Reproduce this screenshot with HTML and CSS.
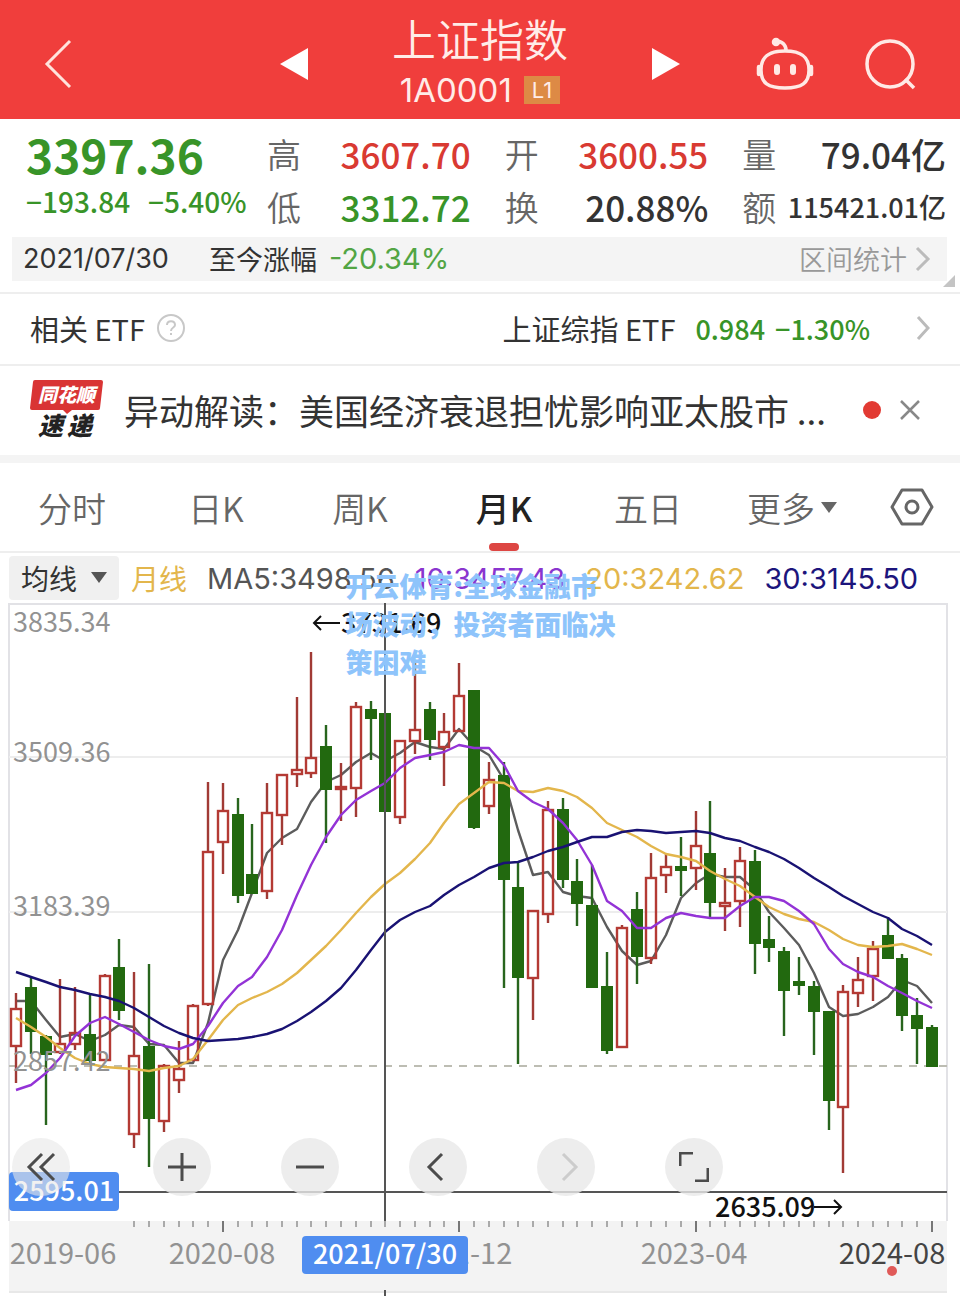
FILE: index.html
```html
<!DOCTYPE html>
<html lang="zh-CN">
<head>
  <meta charset="UTF-8" />
  <meta name="viewport" content="width=device-width, initial-scale=1.0"/>
  <title>上证指数 1A0001</title>
  <link rel="stylesheet" href="styles.css">
</head>
<body>
  <header class="topbar">
    <div class="topbar-left">
      <button type="button" class="icon-btn" aria-label="返回">
        <svg width="30" height="52" viewBox="0 0 30 52"><path d="M26 3L3 26L26 49" fill="none" stroke="#ffe3dc" stroke-width="3"/></svg>
      </button>
    </div>
    <div class="topbar-nav">
      <button type="button" class="icon-btn" aria-label="上一个">
        <svg width="30" height="32" viewBox="0 0 30 32"><path d="M1 16L29 0V32Z" fill="#fff"/></svg>
      </button>
      <div class="title">
        <h1>上证指数</h1>
        <p>1A0001 <span class="level">L1</span></p>
      </div>
      <button type="button" class="icon-btn" aria-label="下一个">
        <svg width="30" height="32" viewBox="0 0 30 32"><path d="M29 16L1 0V32Z" fill="#fff"/></svg>
      </button>
    </div>
    <div class="topbar-right">
      <button type="button" class="icon-btn" aria-label="智能助手">
        <svg width="58" height="54" viewBox="0 0 58 54" fill="none" stroke="#ffe9e5" stroke-width="3.5" stroke-linecap="round">
          <path d="M29 14C46 14 53 20 53 33S46 51 29 51S5 46 5 33S12 14 29 14Z"/>
          <path d="M30 13C30 8 26 4 20 4"/>
          <circle cx="20" cy="5" r="2.5" fill="#ffe9e5"/>
          <path d="M3 30V37M55 30V37" stroke-width="4.5"/>
          <path d="M21 30V35M37 30V35" stroke-width="6"/>
        </svg>
      </button>
      <button type="button" class="icon-btn" aria-label="搜索">
        <svg width="52" height="52" viewBox="0 0 52 52" fill="none" stroke="#ffe9e5" stroke-width="3.5"><circle cx="26" cy="26" r="23"/><path d="M41 41L50 50"/></svg>
      </button>
    </div>
  </header>

  <main>
    <section class="quote">
      <div class="price down">
        <strong>3397.36</strong>
        <div class="change"><span>−193.84</span><span>−5.40%</span></div>
      </div>
      <dl class="stats">
        <div><dt>高</dt><dd class="up">3607.70</dd></div>
        <div><dt>开</dt><dd class="up">3600.55</dd></div>
        <div><dt>量</dt><dd>79.04亿</dd></div>
        <div><dt>低</dt><dd class="down">3312.72</dd></div>
        <div><dt>换</dt><dd>20.88%</dd></div>
        <div><dt>额</dt><dd class="small">115421.01亿</dd></div>
      </dl>
    </section>

    <section class="range">
      <span class="range-date">2021/07/30</span>
      <span>至今涨幅</span>
      <span class="range-value">-20.34%</span>
      <a href="#" class="range-link">区间统计
        <svg width="16" height="26" viewBox="0 0 16 26"><path d="M2 2L13 13L2 24" fill="none" stroke="#bbb" stroke-width="3"/></svg>
      </a>
      <svg class="corner" width="12" height="12" viewBox="0 0 12 12"><path d="M12 0V12H0Z" fill="#c4c4c4"/></svg>
    </section>

    <section class="etf">
      <span>相关 ETF</span>
      <svg width="28" height="28" viewBox="0 0 28 28" fill="none" stroke="#c8c8c8" stroke-width="2">
        <circle cx="14" cy="14" r="13"/><path d="M10 11C10 6 18 6 18 11C18 14 14 13 14 17M14 19V21"/>
      </svg>
      <a href="#" class="etf-link">
        <span>上证综指 ETF</span>
        <b>0.984</b>
        <b>−1.30%</b>
        <svg width="14" height="26" viewBox="0 0 14 26"><path d="M2 2L12 13L2 24" fill="none" stroke="#bbb" stroke-width="3"/></svg>
      </a>
    </section>

    <section class="news">
      <svg class="news-logo" width="74" height="62" viewBox="0 0 74 62">
        <path d="M5 1H71Q73 1 73 3L70 29Q70 31 68 31H42L37 35L33 31H2Q0 31 0 29L3 3Q3 1 5 1Z" fill="#d93434"/>
        <text x="8" y="23" class="logo-top">同花顺</text>
        <text x="8" y="56" class="logo-bottom">速</text>
        <text x="37" y="56" class="logo-bottom">递</text>
      </svg>
      <a href="#" class="news-title">异动解读：美国经济衰退担忧影响亚太股市 ...</a>
      <span class="dot"></span>
      <button type="button" class="icon-btn" aria-label="关闭">
        <svg width="20" height="20" viewBox="0 0 20 20"><path d="M1 1L19 19M19 1L1 19" stroke="#888" stroke-width="2.5"/></svg>
      </button>
    </section>

    <nav class="tabs">
      <button type="button">分时</button>
      <button type="button">日K</button>
      <button type="button">周K</button>
      <button type="button" class="active">月K</button>
      <button type="button">五日</button>
      <button type="button">更多<svg width="16" height="11" viewBox="0 0 16 11"><path d="M0 0H16L8 11Z" fill="#666"/></svg></button>
      <button type="button" aria-label="设置">
        <svg width="44" height="38" viewBox="0 0 44 38" fill="none" stroke="#666" stroke-width="3"><path d="M12 2H32L42 19L32 36H12L2 19Z" stroke-linejoin="round"/><circle cx="22" cy="19" r="6"/></svg>
      </button>
    </nav>

    <section class="legend">
      <div class="select-box">
        <select aria-label="指标"><option>均线</option></select>
        <svg width="16" height="11" viewBox="0 0 16 11"><path d="M0 0H16L8 11Z" fill="#555"/></svg>
      </div>
      <span class="period">月线</span>
      <span class="ma5">MA5:3498.56</span>
      <span class="ma10">10:3457.43</span>
      <span class="ma20">20:3242.62</span>
      <span class="ma30">30:3145.50</span>
    </section>

    <section class="chart">
      <svg class="plot" viewBox="0 603 960 693" role="img" aria-label="上证指数月K线">
        <rect x="9" y="1221" width="938" height="71" fill="#f3f3f3"/>
        <g fill="none" stroke="#e2e2e6" stroke-width="2">
          <path d="M9 1221V604H947V1221"/>
          <path d="M9 757H947M9 912H947" stroke="#ededed"/>
          <path d="M9 1292H947" stroke="#e8e8e8"/>
          <path d="M9 1066H947" stroke="#bdbdb3" stroke-dasharray="8 7"/>
        </g>
        <g id="series"></g>
        <g class="axis-y">
          <text x="13" y="632">3835.34</text>
          <text x="13" y="762">3509.36</text>
          <text x="13" y="916">3183.39</text>
          <text x="13" y="1071">2857.42</text>
        </g>
        <g id="ticks" stroke="#aaa" stroke-width="2"></g>
        <path d="M9 1192H947M385 603V1221M385 1290V1296" stroke="#555" stroke-width="2"/>
        <g class="marker">
          <text x="341" y="633">3731.69</text>
          <text x="715" y="1217">2635.09</text>
        </g>
        <path d="M340 623H314M321 616L314 623L321 630M814 1207H841M834 1200L841 1207L834 1214" fill="none" stroke="#111" stroke-width="2"/>
        <g class="axis-x">
          <text x="63" y="1264">2019-06</text>
          <text x="222" y="1264">2020-08</text>
          <text x="459" y="1264">2021-12</text>
          <text x="694" y="1264">2023-04</text>
          <text x="892" y="1264" class="current">2024-08</text>
        </g>
        <circle cx="892" cy="1271" r="5" fill="#e05a58"/>
        <rect x="9" y="1172" width="110" height="39" rx="4" fill="#4f8df0"/>
        <rect x="302" y="1236" width="166" height="38" rx="4" fill="#4f8df0"/>
        <g class="tag">
          <text x="64" y="1201">2595.01</text>
          <text x="385" y="1264">2021/07/30</text>
        </g>
      </svg>
      <div class="tools">
        <button type="button" class="first" aria-label="最早">
          <svg width="30" height="30" viewBox="0 0 30 30"><path d="M16 2L3 15L16 28M28 2L15 15L28 28"/></svg>
        </button>
        <button type="button" aria-label="放大">
          <svg width="30" height="30" viewBox="0 0 30 30"><path d="M15 1V29M1 15H29"/></svg>
        </button>
        <button type="button" aria-label="缩小">
          <svg width="30" height="30" viewBox="0 0 30 30"><path d="M1 15H29"/></svg>
        </button>
        <button type="button" aria-label="左移">
          <svg width="30" height="30" viewBox="0 0 30 30"><path d="M19 2L6 15L19 28"/></svg>
        </button>
        <button type="button" class="off" aria-label="右移">
          <svg width="30" height="30" viewBox="0 0 30 30"><path d="M12 2L25 15L12 28"/></svg>
        </button>
        <button type="button" aria-label="全屏">
          <svg width="30" height="30" viewBox="0 0 30 30"><path d="M1 14V1H14M29 16V29H16"/></svg>
        </button>
      </div>
      <p class="watermark">开云体育:全球金融市场波动，投资者面临决策困难</p>
    </section>
  </main>

  <script src="chart.js"></script>
</body>
</html>
```

FILE: styles.css
```css
* {
  margin: 0;
  padding: 0;
  box-sizing: border-box;
}

body {
  font-family: 'Noto Sans CJK SC', sans-serif;
  background: #fff;
  color: #333;
  overflow-x: hidden;
}

button {
  border: none;
  background: none;
  font-family: inherit;
  cursor: pointer;
}

a {
  color: inherit;
  text-decoration: none;
}

svg {
  display: block;
  flex-shrink: 0;
}

.up {
  color: #d93a32;
}

.down {
  color: #389428;
}

/* Header */
.topbar {
  display: flex;
  align-items: center;
  height: 119px;
  padding: 8px 44px 0;
  background: #f03e3c;
  color: #ffece8;
}

.topbar-left,
.topbar-right {
  flex: 1;
  display: flex;
}

.topbar-right {
  justify-content: flex-end;
  gap: 50px;
}

.topbar-nav {
  width: 46%;
  display: flex;
  align-items: center;
  justify-content: space-between;
}

.title h1 {
  font-size: 44px;
  font-weight: 350;
  line-height: 52px;
}

.title p {
  display: flex;
  align-items: center;
  justify-content: center;
  gap: 12px;
  font-family: Inter, sans-serif;
  font-size: 33px;
  line-height: 52px;
}

.level {
  background: #dd8a45;
  padding: 0 8px;
  font-size: 22px;
  line-height: 28px;
}

/* Quote */
.quote {
  display: flex;
  padding: 8px 14px 0 26px;
  height: 118px;
}

.price {
  width: 241px;
}

.price strong {
  display: block;
  font-size: 46px;
  font-weight: 700;
  line-height: 54px;
}

.change {
  display: flex;
  gap: 18px;
  font-size: 28px;
  font-weight: 500;
  line-height: 40px;
}

.stats {
  flex: 1;
  display: grid;
  grid-template-columns: repeat(3, 1fr);
  column-gap: 34px;
  align-content: start;
}

.stats div {
  display: flex;
  align-items: center;
  justify-content: space-between;
  line-height: 53px;
  white-space: nowrap;
}

.stats dt {
  font-size: 34px;
  font-weight: 350;
  color: #666;
}

.stats dd {
  font-size: 35px;
  font-weight: 500;
}

.stats .small {
  font-size: 27px;
}

/* Range bar */
.range {
  position: relative;
  display: flex;
  align-items: center;
  height: 44px;
  margin: 0 13px 11px 12px;
  padding: 0 16px 0 11px;
  background: #f4f4f4;
  font-size: 27px;
  line-height: 40px;
}

.range-date {
  font-family: Inter, sans-serif;
  margin-right: 40px;
}

.range-value {
  font-family: Inter, sans-serif;
  font-size: 29px;
  color: #52a544;
  margin-left: 12px;
}

.range-link {
  display: flex;
  align-items: center;
  gap: 8px;
  margin-left: auto;
  color: #999;
  font-weight: 350;
}

.corner {
  position: absolute;
  right: -8px;
  bottom: -6px;
}

/* ETF */
.etf {
  display: flex;
  align-items: center;
  gap: 12px;
  height: 74px;
  padding: 0 30px 2px;
  border-top: 2px solid #eee;
  border-bottom: 2px solid #eee;
  font-size: 29px;
}

.etf-link {
  display: flex;
  align-items: center;
  gap: 10px;
  margin-left: auto;
}

.etf-link span {
  margin-right: 10px;
}

.etf-link b {
  font-size: 27px;
  font-weight: 500;
  color: #389428;
}

.etf-link svg {
  margin-left: 36px;
}

/* News */
.news {
  display: flex;
  align-items: center;
  height: 97px;
  padding: 0 40px 2px 30px;
  border-bottom: 8px solid #f4f4f4;
}

.news-title {
  flex: 1;
  margin-left: 20px;
  font-size: 35px;
  white-space: nowrap;
}

.logo-top,
.logo-bottom {
  font-style: italic;
  font-weight: 900;
}

.logo-top {
  font-size: 19px;
  fill: #fff;
}

.logo-bottom {
  font-size: 25px;
  fill: #222;
}

.dot {
  width: 18px;
  height: 18px;
  margin-right: 19px;
  border-radius: 50%;
  background: #e23a33;
}

/* Tabs */
.tabs {
  display: grid;
  grid-template-columns: repeat(6, 3fr) 2fr;
  height: 90px;
  border-bottom: 2px solid #eee;
}

.tabs button {
  display: flex;
  align-items: center;
  justify-content: center;
  gap: 6px;
  font-size: 34px;
  font-weight: 350;
  color: #666;
}

.tabs .active {
  position: relative;
  font-weight: 500;
  color: #222;
}

.tabs .active::after {
  content: '';
  position: absolute;
  bottom: 0;
  width: 30px;
  height: 8px;
  border-radius: 4px;
  background: #dd4643;
}

/* Legend */
.legend {
  display: flex;
  align-items: center;
  gap: 20px;
  height: 50px;
  padding-left: 9px;
  font-family: Inter, 'Noto Sans CJK SC', sans-serif;
  font-size: 29px;
  white-space: nowrap;
}

.select-box {
  position: relative;
  width: 110px;
  margin-right: -8px;
}

.select-box select {
  width: 100%;
  height: 44px;
  padding-left: 12px;
  border: none;
  border-radius: 4px;
  background: #f0f0f0;
  color: #333;
  font-family: 'Noto Sans CJK SC', sans-serif;
  font-size: 28px;
  appearance: none;
}

.select-box svg {
  position: absolute;
  right: 12px;
  top: 16px;
  pointer-events: none;
}

.period {
  font-size: 28px;
}

.period,
.ma20 {
  color: #e3b64c;
}

.ma5 {
  color: #555;
}

.ma10 {
  color: #8a35cf;
}

.ma30 {
  color: #1c157c;
}

/* Chart */
.chart {
  position: relative;
}

.plot {
  width: 100%;
  height: auto;
}

.axis-y,
.axis-x {
  fill: #929292;
}

.axis-y {
  font-size: 27px;
}

.axis-x {
  font-size: 29px;
}

.axis-x,
.tag {
  text-anchor: middle;
}

.axis-x .current {
  fill: #444;
}

.marker {
  fill: #111;
  font-size: 27px;
  font-weight: 500;
}

.tag {
  fill: #fff;
  font-size: 27px;
  font-weight: 500;
}

.tools {
  position: absolute;
  left: 12px;
  bottom: 100px;
  display: flex;
  gap: 70px;
}

.tools button {
  display: flex;
  align-items: center;
  justify-content: center;
  width: 58px;
  height: 58px;
  border-radius: 50%;
  background: rgba(232, 232, 232, 0.8);
}

.tools .first {
  margin-right: 13px;
  background: rgba(232, 232, 232, 0.6);
}

.tools svg {
  fill: none;
  stroke: #4c4c4c;
  stroke-width: 3;
}

.tools .off svg {
  stroke: #ccc;
}

.watermark {
  position: absolute;
  left: 36%;
  top: -36px;
  width: 276px;
  color: #8ec4fb;
  font-size: 27px;
  font-weight: 900;
  line-height: 38px;
}
```

FILE: chart.js
```js
// [high, body top, body bottom, low, rising]
const candles = [
  [993, 1009, 1046, 1083, 1], [977, 987, 1032, 1054, 0], [1035, 1036, 1055, 1125, 0],
  [979, 1044, 1052, 1054, 1], [987, 1033, 1044, 1050, 1], [995, 1034, 1061, 1063, 0],
  [974, 976, 1060, 1061, 1], [939, 967, 1011, 1020, 0], [972, 1056, 1134, 1148, 1],
  [964, 1046, 1119, 1167, 0], [1064, 1066, 1121, 1132, 1], [1041, 1069, 1080, 1093, 1],
  [1004, 1006, 1060, 1061, 1], [782, 852, 1004, 1006, 1], [783, 811, 842, 874, 1],
  [798, 814, 896, 903, 0], [824, 874, 894, 894, 0], [783, 813, 891, 899, 1],
  [774, 775, 815, 845, 1], [697, 770, 774, 787, 1], [652, 758, 773, 778, 1],
  [725, 746, 790, 843, 0], [763, 787, 789, 821, 1], [702, 707, 788, 817, 1],
  [701, 709, 719, 760, 0], [713, 713, 812, 812, 0], [740, 741, 817, 824, 1],
  [660, 730, 741, 754, 1], [702, 709, 740, 760, 0], [713, 732, 747, 786, 1],
  [663, 696, 731, 732, 1], [690, 690, 828, 829, 0], [762, 780, 806, 814, 1],
  [762, 775, 880, 988, 0], [862, 887, 978, 1064, 0], [911, 911, 978, 1020, 1],
  [801, 810, 914, 923, 1], [798, 809, 880, 888, 0], [859, 881, 904, 926, 0],
  [865, 905, 988, 988, 0], [952, 986, 1051, 1054, 0], [925, 928, 1047, 1048, 1],
  [892, 909, 957, 984, 0], [853, 878, 958, 964, 1], [854, 867, 875, 893, 1],
  [837, 866, 871, 896, 0], [811, 846, 868, 890, 1], [801, 853, 903, 918, 0],
  [868, 903, 906, 931, 1], [847, 861, 901, 927, 1], [850, 861, 944, 974, 0],
  [916, 939, 948, 962, 0], [947, 951, 991, 1036, 0], [957, 981, 986, 995, 0],
  [981, 986, 1012, 1055, 0], [1011, 1011, 1101, 1130, 0], [985, 992, 1107, 1173, 1],
  [957, 980, 993, 1007, 1], [941, 949, 976, 1001, 1], [917, 935, 959, 959, 0],
  [954, 958, 1016, 1031, 0], [998, 1015, 1029, 1064, 0], [1025, 1027, 1067, 1067, 0]
];

const ma5 = [1001, 1001, 1020, 1037, 1034, 1041, 1035, 1025, 1027, 1044, 1045, 1063, 1063, 1023, 960, 930, 893, 853, 838, 829, 802, 782, 775, 762, 753, 761, 753, 742, 747, 749, 729, 746, 755, 780, 830, 875, 872, 892, 896, 898, 927, 951, 965, 961, 935, 898, 883, 874, 877, 877, 890, 912, 928, 945, 973, 1007, 1016, 1014, 1007, 997, 980, 986, 1003];
const ma10 = [1090, 1085, 1073, 1058, 1036, 1023, 1017, 1024, 1032, 1040, 1046, 1049, 1044, 1026, 1003, 986, 977, 957, 930, 895, 865, 837, 815, 800, 791, 783, 768, 758, 755, 752, 745, 748, 748, 765, 791, 802, 809, 823, 840, 865, 901, 911, 928, 928, 918, 913, 916, 918, 918, 906, 897, 897, 901, 911, 924, 949, 964, 972, 977, 986, 993, 1001, 1008];
const ma20 = [1018, 1027, 1037, 1048, 1058, 1064, 1067, 1068, 1069, 1071, 1068, 1066, 1059, 1040, 1020, 1005, 998, 992, 984, 973, 960, 946, 930, 913, 897, 884, 873, 859, 843, 823, 804, 793, 782, 783, 791, 792, 788, 791, 797, 808, 823, 830, 837, 846, 854, 857, 861, 871, 879, 886, 897, 907, 914, 919, 922, 930, 939, 945, 947, 946, 944, 949, 955];
const ma30 = [972, 977, 982, 987, 990, 994, 997, 1001, 1008, 1017, 1026, 1033, 1038, 1041, 1040, 1039, 1037, 1034, 1029, 1021, 1012, 1001, 988, 970, 950, 932, 920, 912, 906, 895, 885, 877, 868, 863, 862, 857, 851, 847, 842, 837, 837, 832, 830, 831, 833, 832, 831, 833, 838, 841, 847, 852, 859, 868, 878, 887, 896, 904, 912, 918, 929, 936, 945];

const step = 916 / 62;
const xAt = i => Math.round(16 + i * step);

function line(values, color) {
  const points = values.map((y, i) => `${xAt(i)},${y}`).join(' ');
  return `<polyline points="${points}" fill="none" stroke="${color}" stroke-width="2.4" stroke-linejoin="round"/>`;
}

function candle([high, top, bottom, low, rising], i) {
  const x = xAt(i);
  if (!rising) {
    return `<path d="M${x} ${high}V${low}" stroke="#28651d" stroke-width="2.4"/>
      <rect x="${x - 6}" y="${top}" width="12" height="${bottom - top}" fill="#22690f"/>`;
  }
  return `<path d="M${x} ${high}V${top}M${x} ${bottom}V${low}" stroke="#a13a35" stroke-width="2.4"/>
    <rect x="${x - 5}" y="${top}" width="10" height="${bottom - top}" fill="none" stroke="#b43a34" stroke-width="2.4"/>`;
}

document.getElementById('series').innerHTML =
  line(ma5, '#5c5c5c') +
  candles.map(candle).join('') +
  line(ma20, '#e3b64c') +
  line(ma10, '#9333d6') +
  line(ma30, '#191273');

// Month ticks, a longer one under each labelled month
let ticks = '';
for (let i = 8; i < candles.length; i++) {
  const major = (i - 14) % 16 === 0;
  ticks += `<path d="M${xAt(i)} 1221V${major ? 1232 : 1227}"${major ? ' stroke="#777"' : ''}/>`;
}
document.getElementById('ticks').innerHTML = ticks;
```
